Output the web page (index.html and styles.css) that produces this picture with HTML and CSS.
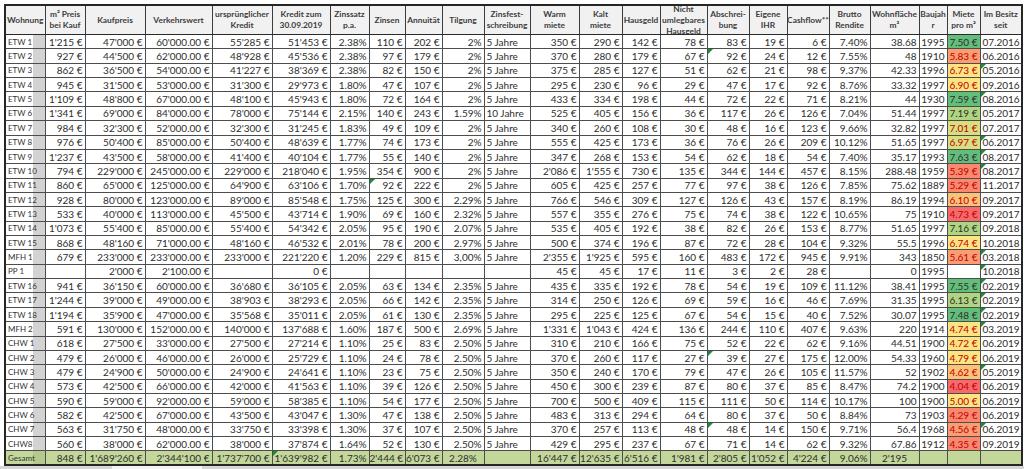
FILE: index.html
```html
<!DOCTYPE html>
<html lang="de">
<head>
<meta charset="utf-8">
<title>Wohnungen Übersicht</title>
<link rel="stylesheet" href="styles.css">
</head>
<body>
<div class="sheet">
<table class="grid">
<colgroup>
<col><col><col><col><col><col><col><col><col><col><col><col><col><col><col><col><col><col><col><col><col><col><col>
</colgroup>
<thead>
<tr>
<th><div class="h">Wohnung</div></th>
<th><div class="h">m² Preis<br>bei Kauf</div></th>
<th><div class="h">Kaufpreis</div></th>
<th><div class="h">Verkehrswert</div></th>
<th><div class="h">ursprünglicher<br>Kredit</div></th>
<th><div class="h">Kredit zum<br>30.09.2019</div></th>
<th><div class="h">Zinssatz<br>p.a.</div></th>
<th><div class="h">Zinsen</div></th>
<th><div class="h">Annuität</div></th>
<th><div class="h">Tilgung</div></th>
<th><div class="h">Zinsfest-<br>schreibung</div></th>
<th><div class="h">Warm<br>miete</div></th>
<th><div class="h">Kalt<br>miete</div></th>
<th><div class="h">Hausgeld</div></th>
<th><div class="h">Nicht<br>umlegbares<br>Hausgeld</div></th>
<th><div class="h">Abschrei-<br>bung</div></th>
<th><div class="h">Eigene<br>IHR</div></th>
<th><div class="h">Cashflow**</div></th>
<th><div class="h">Brutto<br>Rendite</div></th>
<th><div class="h">Wohnfläche<br>m²</div></th>
<th><div class="h">Baujah<br>r</div></th>
<th><div class="h">Miete<br>pro m²</div></th>
<th><div class="h">Im Besitz<br>seit</div></th>
</tr>
</thead>
<tbody>
<tr><td class="lb">ETW 1</td><td>1'215 €</td><td>47'000 €</td><td>60'000.00 €</td><td>55'285 €</td><td>51'453 €</td><td>2.38%</td><td>110 €</td><td>202 €</td><td>2%</td><td class="l">5 Jahre</td><td>350 €</td><td>290 €</td><td>142 €</td><td>78 €</td><td>83 €</td><td>19 €</td><td>6 €</td><td>7.40%</td><td>38.68</td><td>1995</td><td class="m g">7.50 €</td><td class="l">07.2016</td></tr>
<tr><td class="lb">ETW 2</td><td>927 €</td><td>44'500 €</td><td>62'000.00 €</td><td>48'928 €</td><td>45'536 €</td><td>2.38%</td><td>97 €</td><td>179 €</td><td>2%</td><td class="l">5 Jahre</td><td>370 €</td><td>280 €</td><td>179 €</td><td>67 €</td><td class="tri">92 €</td><td>24 €</td><td>12 €</td><td>7.55%</td><td>48</td><td>1910</td><td class="m o rt">5.83 €</td><td class="l">06.2016</td></tr>
<tr><td class="lb">ETW 3</td><td>862 €</td><td>36'500 €</td><td>54'000.00 €</td><td>41'227 €</td><td>38'369 €</td><td>2.38%</td><td>82 €</td><td>150 €</td><td>2%</td><td class="l">5 Jahre</td><td>375 €</td><td>285 €</td><td>127 €</td><td>51 €</td><td>62 €</td><td>21 €</td><td>98 €</td><td>9.37%</td><td>42.33</td><td>1996</td><td class="m y rt">6.73 €</td><td class="l tri">05.2016</td></tr>
<tr><td class="lb">ETW 4</td><td>945 €</td><td>31'500 €</td><td>53'000.00 €</td><td>31'300 €</td><td>29'973 €</td><td>1.80%</td><td>47 €</td><td>107 €</td><td>2%</td><td class="l">5 Jahre</td><td>295 €</td><td>230 €</td><td>96 €</td><td>29 €</td><td>47 €</td><td>17 €</td><td>92 €</td><td>8.76%</td><td>33.32</td><td>1997</td><td class="m y rt">6.90 €</td><td class="l">09.2016</td></tr>
<tr><td class="lb">ETW 5</td><td>1'109 €</td><td>48'800 €</td><td>67'000.00 €</td><td>48'100 €</td><td>45'943 €</td><td>1.80%</td><td>72 €</td><td>164 €</td><td>2%</td><td class="l">5 Jahre</td><td>433 €</td><td>334 €</td><td>198 €</td><td>44 €</td><td>72 €</td><td>22 €</td><td>71 €</td><td>8.21%</td><td>44</td><td>1930</td><td class="m g">7.59 €</td><td class="l tri">08.2016</td></tr>
<tr><td class="lb">ETW 6</td><td>1'341 €</td><td>69'000 €</td><td>84'000.00 €</td><td>78'000 €</td><td>75'144 €</td><td>2.15%</td><td>140 €</td><td>243 €</td><td>1.59%</td><td class="l">10 Jahre</td><td>525 €</td><td>405 €</td><td>156 €</td><td>36 €</td><td>117 €</td><td>26 €</td><td>126 €</td><td>7.04%</td><td>51.44</td><td>1997</td><td class="m lg">7.19 €</td><td class="l">05.2017</td></tr>
<tr><td class="lb">ETW 7</td><td>984 €</td><td>32'300 €</td><td>52'000.00 €</td><td>32'300 €</td><td>31'245 €</td><td>1.83%</td><td>49 €</td><td>109 €</td><td>2%</td><td class="l">5 Jahre</td><td>340 €</td><td>260 €</td><td>108 €</td><td>30 €</td><td>48 €</td><td>16 €</td><td>123 €</td><td>9.66%</td><td>32.82</td><td>1997</td><td class="m yg rt">7.01 €</td><td class="l">07.2017</td></tr>
<tr><td class="lb">ETW 8</td><td>976 €</td><td>50'400 €</td><td>85'000.00 €</td><td>50'400 €</td><td>48'639 €</td><td>1.77%</td><td>74 €</td><td>173 €</td><td>2%</td><td class="l">5 Jahre</td><td>555 €</td><td>425 €</td><td>173 €</td><td>36 €</td><td>76 €</td><td>26 €</td><td>209 €</td><td>10.12%</td><td>51.65</td><td>1997</td><td class="m yg rt">6.97 €</td><td class="l tri">06.2017</td></tr>
<tr><td class="lb">ETW 9</td><td>1'237 €</td><td>43'500 €</td><td>58'000.00 €</td><td>41'400 €</td><td>40'104 €</td><td>1.77%</td><td>55 €</td><td>140 €</td><td>2%</td><td class="l">5 Jahre</td><td>347 €</td><td>268 €</td><td>153 €</td><td>54 €</td><td>62 €</td><td>18 €</td><td>54 €</td><td>7.40%</td><td>35.17</td><td>1993</td><td class="m g">7.63 €</td><td class="l tri">08.2017</td></tr>
<tr><td class="lb">ETW 10</td><td>794 €</td><td>229'000 €</td><td>245'000.00 €</td><td>229'000 €</td><td>218'040 €</td><td>1.95%</td><td>354 €</td><td>900 €</td><td>2%</td><td class="l">5 Jahre</td><td>2'086 €</td><td>1'555 €</td><td>730 €</td><td>135 €</td><td>344 €</td><td>144 €</td><td>457 €</td><td>8.15%</td><td>288.48</td><td>1959</td><td class="m s rt">5.39 €</td><td class="l tri">08.2017</td></tr>
<tr><td class="lb">ETW 11</td><td>860 €</td><td>65'000 €</td><td>125'000.00 €</td><td>64'900 €</td><td>63'106 €</td><td>1.70%</td><td class="tri">92 €</td><td>222 €</td><td>2%</td><td class="l">5 Jahre</td><td>605 €</td><td>425 €</td><td>257 €</td><td>77 €</td><td>97 €</td><td>38 €</td><td>126 €</td><td>7.85%</td><td>75.62</td><td>1889</td><td class="m s rt">5.29 €</td><td class="l">11.2017</td></tr>
<tr><td class="lb">ETW 12</td><td>928 €</td><td>80'000 €</td><td>123'000.00 €</td><td>89'000 €</td><td>85'548 €</td><td>1.75%</td><td>125 €</td><td>300 €</td><td>2.29%</td><td class="l">5 Jahre</td><td>766 €</td><td>546 €</td><td>309 €</td><td>127 €</td><td>126 €</td><td>43 €</td><td>157 €</td><td>8.19%</td><td>86.19</td><td>1994</td><td class="m oy rt">6.10 €</td><td class="l">09.2017</td></tr>
<tr><td class="lb">ETW 13</td><td>533 €</td><td>40'000 €</td><td>113'000.00 €</td><td>45'500 €</td><td>43'714 €</td><td>1.90%</td><td>69 €</td><td>160 €</td><td>2.32%</td><td class="l">5 Jahre</td><td>557 €</td><td>355 €</td><td>276 €</td><td>75 €</td><td>74 €</td><td>38 €</td><td>122 €</td><td>10.65%</td><td>75</td><td>1910</td><td class="m r rt">4.73 €</td><td class="l">09.2017</td></tr>
<tr><td class="lb">ETW 14</td><td>1'073 €</td><td>55'400 €</td><td>85'000.00 €</td><td>55'400 €</td><td>54'342 €</td><td>2.05%</td><td>95 €</td><td>190 €</td><td>2.07%</td><td class="l">5 Jahre</td><td>535 €</td><td>405 €</td><td>192 €</td><td>38 €</td><td>82 €</td><td>26 €</td><td>153 €</td><td>8.77%</td><td>51.65</td><td>1997</td><td class="m lg">7.16 €</td><td class="l">09.2018</td></tr>
<tr><td class="lb">ETW 15</td><td>868 €</td><td>48'160 €</td><td>71'000.00 €</td><td>48'160 €</td><td>46'532 €</td><td>2.01%</td><td>78 €</td><td>200 €</td><td>2.97%</td><td class="l">5 Jahre</td><td>500 €</td><td>374 €</td><td>196 €</td><td>87 €</td><td>72 €</td><td>28 €</td><td>104 €</td><td>9.32%</td><td>55.5</td><td>1996</td><td class="m y rt">6.74 €</td><td class="l">10.2018</td></tr>
<tr><td class="lb">MFH 1</td><td>679 €</td><td>233'000 €</td><td>233'000.00 €</td><td>233'000 €</td><td>221'220 €</td><td>1.20%</td><td>229 €</td><td>815 €</td><td>3,00%</td><td class="l">5 Jahre</td><td>2'355 €</td><td>1'925 €</td><td>595 €</td><td>160 €</td><td>483 €</td><td>172 €</td><td>945 €</td><td>9.91%</td><td>343</td><td>1850</td><td class="m o rt">5.61 €</td><td class="l tri">03.2018</td></tr>
<tr><td class="lb">PP 1</td><td></td><td>2'000 €</td><td>2'100.00 €</td><td></td><td>0 €</td><td></td><td></td><td></td><td></td><td class="l"></td><td>45 €</td><td>45 €</td><td>17 €</td><td>11 €</td><td>3 €</td><td>2 €</td><td>28 €</td><td></td><td>0</td><td>1995</td><td class="m"></td><td class="l tri">10.2018</td></tr>
<tr><td class="lb">ETW 16</td><td>941 €</td><td>36'150 €</td><td>60'000.00 €</td><td>36'680 €</td><td>36'105 €</td><td>2.05%</td><td>63 €</td><td>134 €</td><td>2.35%</td><td class="l">5 Jahre</td><td>435 €</td><td>335 €</td><td>192 €</td><td>78 €</td><td>54 €</td><td>19 €</td><td>109 €</td><td>11.12%</td><td>38.41</td><td>1995</td><td class="m g">7.55 €</td><td class="l tri">02.2019</td></tr>
<tr><td class="lb">ETW 17</td><td>1'244 €</td><td>39'000 €</td><td>49'000.00 €</td><td>38'903 €</td><td>38'293 €</td><td>2.05%</td><td>66 €</td><td>142 €</td><td>2.35%</td><td class="l">5 Jahre</td><td>314 €</td><td>250 €</td><td>126 €</td><td>69 €</td><td>59 €</td><td>16 €</td><td>46 €</td><td>7.69%</td><td>31.35</td><td>1995</td><td class="m lg">6.13 €</td><td class="l tri">02.2019</td></tr>
<tr><td class="lb">ETW 18</td><td>1'194 €</td><td>35'900 €</td><td>47'000.00 €</td><td>35'568 €</td><td>35'011 €</td><td>2.05%</td><td>61 €</td><td>130 €</td><td>2.35%</td><td class="l">5 Jahre</td><td>295 €</td><td>225 €</td><td>125 €</td><td>67 €</td><td>54 €</td><td>15 €</td><td>40 €</td><td>7.52%</td><td>30.07</td><td>1995</td><td class="m g">7.48 €</td><td class="l tri">02.2019</td></tr>
<tr><td class="lb">MFH 2</td><td>591 €</td><td>130'000 €</td><td>152'000.00 €</td><td>140'000 €</td><td>137'688 €</td><td>1.60%</td><td>187 €</td><td>500 €</td><td>2.69%</td><td class="l">5 Jahre</td><td>1'331 €</td><td>1'043 €</td><td>424 €</td><td>136 €</td><td>244 €</td><td>110 €</td><td>407 €</td><td>9.63%</td><td>220</td><td>1914</td><td class="m y rt">4.74 €</td><td class="l tri">03.2019</td></tr>
<tr><td class="lb">CHW 1</td><td>618 €</td><td>27'500 €</td><td>33'000.00 €</td><td>27'500 €</td><td>27'214 €</td><td>1.10%</td><td>25 €</td><td>83 €</td><td>2.50%</td><td class="l">5 Jahre</td><td>310 €</td><td>210 €</td><td>166 €</td><td>75 €</td><td>52 €</td><td>22 €</td><td>62 €</td><td>9.16%</td><td>44.51</td><td>1900</td><td class="m y rt">4.72 €</td><td class="l">06.2019</td></tr>
<tr><td class="lb">CHW 2</td><td>479 €</td><td>26'000 €</td><td>46'000.00 €</td><td>26'000 €</td><td>25'729 €</td><td>1.10%</td><td>24 €</td><td>78 €</td><td>2.50%</td><td class="l">5 Jahre</td><td>370 €</td><td>260 €</td><td>117 €</td><td>27 €</td><td class="tri">39 €</td><td>27 €</td><td>175 €</td><td>12.00%</td><td>54.33</td><td>1960</td><td class="m y rt">4.79 €</td><td class="l">06.2019</td></tr>
<tr><td class="lb">CHW 3</td><td>479 €</td><td>24'900 €</td><td>50'000.00 €</td><td>24'900 €</td><td>24'641 €</td><td>1.10%</td><td>23 €</td><td>75 €</td><td>2.50%</td><td class="l">5 Jahre</td><td>350 €</td><td>240 €</td><td>170 €</td><td>79 €</td><td>47 €</td><td>26 €</td><td>105 €</td><td>11.57%</td><td>52</td><td>1902</td><td class="m oy rt">4.62 €</td><td class="l tri">05.2019</td></tr>
<tr><td class="lb">CHW 4</td><td>573 €</td><td>42'500 €</td><td>66'000.00 €</td><td>42'000 €</td><td>41'563 €</td><td>1.10%</td><td>39 €</td><td>126 €</td><td>2.50%</td><td class="l">5 Jahre</td><td>450 €</td><td>300 €</td><td>239 €</td><td>87 €</td><td>80 €</td><td>37 €</td><td>85 €</td><td>8.47%</td><td>74.2</td><td>1900</td><td class="m r rt">4.04 €</td><td class="l">06.2019</td></tr>
<tr><td class="lb">CHW 5</td><td>590 €</td><td>59'000 €</td><td>92'000.00 €</td><td>59'000 €</td><td>58'385 €</td><td>1.10%</td><td>54 €</td><td>177 €</td><td>2.50%</td><td class="l">5 Jahre</td><td>700 €</td><td>500 €</td><td>409 €</td><td>115 €</td><td>111 €</td><td>50 €</td><td>114 €</td><td>10.17%</td><td>100</td><td>1900</td><td class="m y rt">5.00 €</td><td class="l">06.2019</td></tr>
<tr><td class="lb">CHW 6</td><td>582 €</td><td>42'500 €</td><td>67'000.00 €</td><td>43'500 €</td><td>43'047 €</td><td>1.30%</td><td>47 €</td><td>138 €</td><td>2.50%</td><td class="l">5 Jahre</td><td>483 €</td><td>313 €</td><td>294 €</td><td>64 €</td><td>80 €</td><td>37 €</td><td>50 €</td><td>8.84%</td><td>73</td><td>1903</td><td class="m s rt">4.29 €</td><td class="l">06.2019</td></tr>
<tr><td class="lb">CHW 7</td><td>563 €</td><td>31'750 €</td><td>48'000.00 €</td><td>33'750 €</td><td>33'398 €</td><td>1.30%</td><td>37 €</td><td>107 €</td><td>2.50%</td><td class="l">5 Jahre</td><td>370 €</td><td>257 €</td><td>113 €</td><td>48 €</td><td class="tri">48 €</td><td>14 €</td><td>150 €</td><td>9.71%</td><td>56.4</td><td>1968</td><td class="m o rt">4.56 €</td><td class="l tri">06.2019</td></tr>
<tr><td class="lb">CHW8</td><td>560 €</td><td>38'000 €</td><td>62'000.00 €</td><td>38'000 €</td><td>37'874 €</td><td>1.64%</td><td>52 €</td><td>130 €</td><td>2.50%</td><td class="l">5 Jahre</td><td>429 €</td><td>295 €</td><td>237 €</td><td>67 €</td><td>71 €</td><td>14 €</td><td>62 €</td><td>9.32%</td><td>67.86</td><td>1912</td><td class="m s rt">4.35 €</td><td class="l">09.2019</td></tr>
<tr class="total"><td class="lb">Gesamt</td><td>848 €</td><td>1'689'260 €</td><td>2'344'100 €</td><td>1'737'700 €</td><td class="tri">1'639'982 €</td><td>1.73%</td><td>2'444 €</td><td>6'073 €</td><td class="c">2.28%</td><td class="l"></td><td>16'447 €</td><td>12'635 €</td><td>6'516 €</td><td>1'981 €</td><td>2'805 €</td><td>1'052 €</td><td>4'224 €</td><td>9.06%</td><td class="c">2'195</td><td></td><td></td><td></td></tr>
</tbody>
</table>
<div class="strip"><span class="seg"></span></div>
</div>
</body>
</html>
```

FILE: styles.css
```css
html, body {
  margin: 0;
  padding: 0;
  background: #ffffff;
}

body {
  font-family: Lato, "Liberation Sans", sans-serif;
  color: #2e2e2e;
}

.sheet {
  padding: 4px 0 0 4px;
  width: 1018px;
}

.grid {
  border-collapse: collapse;
  table-layout: fixed;
  width: 1017px;
  border: 2px solid #262626;
}

.grid col:nth-child(1)  { width: 40px; }
.grid col:nth-child(2)  { width: 40px; }
.grid col:nth-child(3)  { width: 60px; }
.grid col:nth-child(4)  { width: 67px; }
.grid col:nth-child(5)  { width: 60px; }
.grid col:nth-child(6)  { width: 58px; }
.grid col:nth-child(7)  { width: 39px; }
.grid col:nth-child(8)  { width: 36px; }
.grid col:nth-child(9)  { width: 37px; }
.grid col:nth-child(10) { width: 42px; }
.grid col:nth-child(11) { width: 46px; }
.grid col:nth-child(12) { width: 49px; }
.grid col:nth-child(13) { width: 43px; }
.grid col:nth-child(14) { width: 38px; }
.grid col:nth-child(15) { width: 47px; }
.grid col:nth-child(16) { width: 42px; }
.grid col:nth-child(17) { width: 38px; }
.grid col:nth-child(18) { width: 42px; }
.grid col:nth-child(19) { width: 41px; }
.grid col:nth-child(20) { width: 49px; }
.grid col:nth-child(21) { width: 28px; }
.grid col:nth-child(22) { width: 33px; }
.grid col:nth-child(23) { width: 42px; }

.grid th {
  height: 28px;
  padding: 0;
  border: 1px solid #3c3c3c;
  border-bottom: 1px solid #2a2a2a;
  background: #f1f1f1;
  color: #3d3d3d;
  font-size: 8.4px;
  font-weight: 700;
  line-height: 11px;
  text-align: center;
  vertical-align: middle;
}

.h {
  height: 28px;
  display: flex;
  align-items: center;
  justify-content: center;
  overflow: hidden;
  white-space: nowrap;
}

.grid tbody tr {
  height: 14.37px;
}

.grid td {
  padding: 0 2px 0 0;
  border: 1px solid #4d4d4d;
  font-size: 10px;
  line-height: 12px;
  text-align: right;
  white-space: nowrap;
  overflow: hidden;
  color: #2e2e2e;
  vertical-align: middle;
}

.grid td.lb {
  text-align: left;
  padding: 0 0 0 2px;
  font-size: 8px;
  color: #333333;
  background: linear-gradient(to right, #ffffff 0, #ffffff 70%, #d3d3d3 70%, #d3d3d3 100%);
}

.grid td.l {
  text-align: left;
  padding: 0 0 0 2px;
}

.grid td.c {
  text-align: center;
  padding: 0;
}

.grid td.tri {
  position: relative;
}

.grid td.tri::before {
  content: "";
  position: absolute;
  left: 0;
  top: 0;
  width: 0;
  height: 0;
  border-top: 5px solid #1d8a3a;
  border-right: 5px solid transparent;
}

/* Miete pro m2 colour scale */
.grid td.g  { background: #63be7b; }
.grid td.lg { background: #b0d580; }
.grid td.yg { background: #d8df81; }
.grid td.y  { background: #fde482; }
.grid td.oy { background: #fcc27a; }
.grid td.o  { background: #fa9d73; }
.grid td.s  { background: #f9886f; }
.grid td.r  { background: #f8696b; }
.grid td.rt { color: #c00000; }

.grid tr.total td {
  background: #c4d79b;
}

.grid tr.total td.lb {
  background: linear-gradient(to right, #c4d79b 0, #c4d79b 70%, #b5c98d 70%, #b5c98d 100%);
}

.strip {
  height: 6px;
  margin-left: -4px;
  width: 1024px;
  background: #d6d6d6;
  display: flex;
}

.seg {
  display: block;
  width: 90px;
  margin-left: 112px;
  background: #f4f4f4;
}
```
